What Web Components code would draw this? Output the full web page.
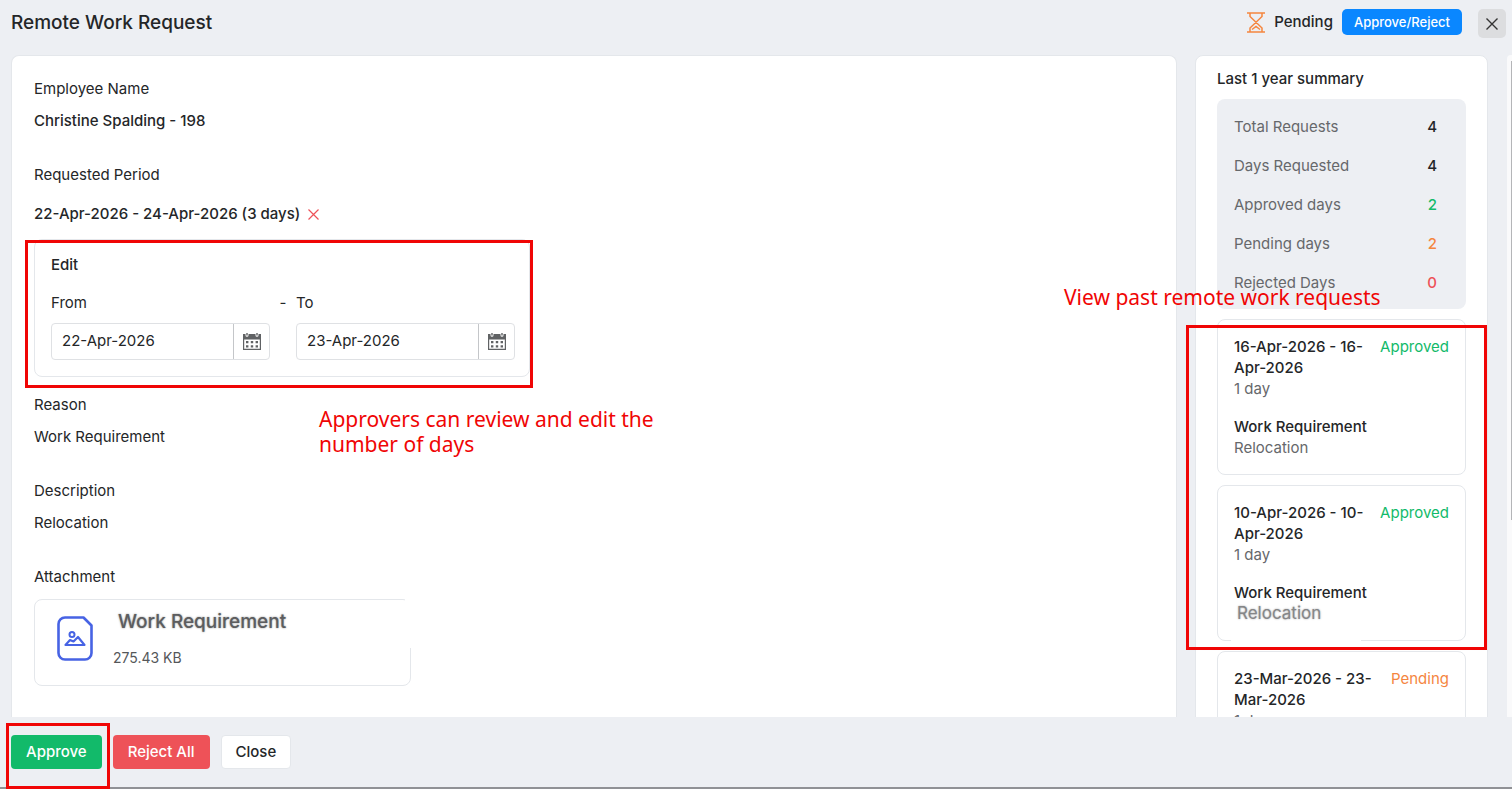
<!DOCTYPE html>
<html lang="en">
<head>
<meta charset="utf-8">
<meta name="viewport" content="width=device-width, initial-scale=1">
<title>Remote Work Request</title>
<style>
  html, body {
    margin: 0;
    height: 100%;
  }

  body {
    --text: #242628;
    --muted: #66686b;
    --line: #e4e7eb;
    --surface: #edeff3;
    --green: #12ba6a;
    --orange: #f5863f;
    --red: #ee5258;
    --mark: #f00505;
    font-family: Inter, "Liberation Sans", sans-serif;
    font-size: 15px;
    line-height: 24px;
    color: var(--text);
    background: var(--surface);
    overflow: hidden;
  }
</style>
</head>
<body>
<request-page>
  <request-header slot="header" heading="Remote Work Request" status="Pending"></request-header>

  <request-field label="Employee Name"><b>Christine Spalding - 198</b></request-field>
  <request-period label="Requested Period" value="22-Apr-2026 - 24-Apr-2026 (3 days)">
    <date-field name="from" label="From" value="22-Apr-2026"></date-field>
    <date-field name="to" label="To" value="23-Apr-2026"></date-field>
  </request-period>
  <request-field label="Reason">Work Requirement</request-field>
  <request-field label="Description">Relocation</request-field>
  <request-field label="Attachment">
    <attachment-card name="Work Requirement" size="275.43 KB"></attachment-card>
  </request-field>

  <year-summary slot="aside" heading="Last 1 year summary">
    <stat-row slot="stats" label="Total Requests" value="4"></stat-row>
    <stat-row slot="stats" label="Days Requested" value="4"></stat-row>
    <stat-row slot="stats" label="Approved days" value="2" tone="green"></stat-row>
    <stat-row slot="stats" label="Pending days" value="2" tone="orange"></stat-row>
    <stat-row slot="stats" label="Rejected Days" value="0" tone="red"></stat-row>
    <history-card period="16-Apr-2026 - 16-Apr-2026" days="1 day" status="Approved" reason="Work Requirement" note="Relocation"></history-card>
    <history-card period="10-Apr-2026 - 10-Apr-2026" days="1 day" status="Approved" reason="Work Requirement" note="Relocation" retouched></history-card>
    <history-card period="23-Mar-2026 - 23-Mar-2026" days="1 day" status="Pending" reason="Work Requirement" note="Relocation"></history-card>
  </year-summary>

  <action-bar slot="footer"></action-bar>
</request-page>

<script>
  class BaseElement extends HTMLElement {
    constructor() {
      super();
      this.attachShadow({ mode: 'open' });
    }

    connectedCallback() {
      this.shadowRoot.innerHTML = this.render();
    }

    attr(name) {
      return this.escapeHtml(this.getAttribute(name) || '');
    }

    escapeHtml(text) {
      const div = document.createElement('div');
      div.textContent = text;
      return div.innerHTML;
    }
  }

  class RequestPage extends BaseElement {
    render() {
      return `
        <style>
          :host {
            display: flex;
            flex-direction: column;
            height: 100vh;
          }

          .body {
            flex: 1;
            min-height: 0;
            display: flex;
            padding-left: 11px;
            overflow: hidden;
          }

          main {
            flex: 1;
            min-width: 0;
            box-sizing: border-box;
            padding: 21px 22px;
            border: 1px solid var(--line);
            border-bottom: 0;
            border-radius: 8px 8px 0 0;
            background: white;
            display: flex;
            flex-direction: column;
            gap: 30px;
            height: max-content;
            min-height: 100%;
          }

          aside {
            width: 293px;
            margin: 0 19px 0 18px;
          }

          .scroll {
            width: 5px;
            box-sizing: border-box;
            padding: 6px 0 0 4px;
            border-radius: 4px 0 0 0;
            background: #fafafb;
          }

          .thumb {
            height: 70%;
            background: #b4b5b8;
          }
        </style>
        <slot name="header"></slot>
        <div class="body">
          <main><slot></slot></main>
          <aside><slot name="aside"></slot></aside>
          <div class="scroll"><div class="thumb"></div></div>
        </div>
        <slot name="footer"></slot>
      `;
    }
  }

  class RequestHeader extends BaseElement {
    render() {
      return `
        <style>
          :host {
            display: block;
          }

          header {
            display: flex;
            align-items: flex-start;
            padding: 9px 6px 17px 11px;
          }

          h1 {
            flex: 1;
            margin: 0;
            font-size: 19px;
            line-height: 28px;
            font-weight: 500;
          }

          .status {
            display: flex;
            align-items: center;
            gap: 9px;
            line-height: 26px;
            font-weight: 500;
          }

          svg {
            display: block;
          }

          button {
            font: inherit;
            border: 0;
            border-radius: 5px;
            cursor: pointer;
          }

          .review {
            margin: 0 16px 0 9px;
            padding: 0 12px;
            font-size: 13px;
            line-height: 26px;
            font-weight: 500;
            color: white;
            background: #0a87ff;
          }

          .close {
            display: grid;
            place-items: center;
            width: 28px;
            height: 29px;
            padding: 0;
            color: #333;
            background: #dcdddf;
          }
        </style>
        <header>
          <h1>${this.attr('heading')}</h1>
          <span class="status">
            <svg width="18" height="21" viewBox="0 0 18 21" fill="none" stroke="#f5863f" stroke-width="1.500" aria-hidden="true">
              <path d="M0 1h18M0 20h18M3 1v3.500L15 16v4M15 1v3.500L3 16v4M5 17.500l4-3 4 3"/>
            </svg>
            ${this.attr('status')}
          </span>
          <button class="review" type="button">Approve/Reject</button>
          <button class="close" type="button" aria-label="Close">
            <svg width="12" height="12" viewBox="0 0 12 12" stroke="currentColor" stroke-width="1.400"><path d="M0.500 0.500l11 11M11.500 0.500l-11 11"/></svg>
          </button>
        </header>
      `;
    }
  }

  class RequestField extends BaseElement {
    render() {
      return `
        <style>
          :host {
            display: flex;
            flex-direction: column;
            gap: 8px;
          }

          ::slotted(b) {
            font-weight: 500;
          }
        </style>
        <div>${this.attr('label')}</div>
        <div><slot></slot></div>
      `;
    }
  }

  // Red rectangle laid over its positioned parent
  class MarkFrame extends BaseElement {
    render() {
      return `
        <style>
          :host {
            position: absolute;
            z-index: 1;
            box-sizing: border-box;
            border: 3px solid var(--mark);
            pointer-events: none;
          }
        </style>
      `;
    }
  }

  class MarkNote extends BaseElement {
    render() {
      return `
        <style>
          :host {
            position: absolute;
            z-index: 1;
            font: 21px/25px "Noto Sans", sans-serif;
            color: var(--mark);
            pointer-events: none;
          }
        </style>
        <slot></slot>
      `;
    }
  }

  class RequestPeriod extends BaseElement {
    render() {
      return `
        <style>
          :host {
            display: block;
            margin-bottom: -14px;
          }

          .value {
            display: flex;
            align-items: center;
            gap: 8px;
            height: 38px;
            margin: 8px 0 6px;
            font-weight: 500;
          }

          button {
            display: grid;
            padding: 0;
            border: 0;
            background: none;
            color: var(--red);
            cursor: pointer;
          }

          fieldset {
            position: relative;
            width: max-content;
            margin: 0;
            padding: 13px 14px 16px 16px;
            border: 1px solid var(--line);
            border-radius: 8px;
          }

          h2 {
            margin: 0 0 14px;
            font-size: 15px;
            font-weight: 500;
          }

          .range {
            display: flex;
          }

          .dash {
            width: 26px;
            text-align: center;
          }

          mark-frame {
            inset: 0 -4px -12px -10px;
          }

          mark-note {
            left: 284px;
            top: 167px;
            width: 360px;
          }
        </style>
        <div>${this.attr('label')}</div>
        <div class="value">
          ${this.attr('value')}
          <button type="button" aria-label="Remove period">
            <svg width="11" height="11" viewBox="0 0 11 11" stroke="#ee5258" stroke-width="1.200"><path d="M0.500 0.500l10 10M10.500 0.500l-10 10"/></svg>
          </button>
        </div>
        <fieldset aria-label="Edit period">
          <h2>Edit</h2>
          <div class="range">
            <slot name="from"></slot>
            <span class="dash">-</span>
            <slot name="to"></slot>
          </div>
          <mark-frame></mark-frame>
          <mark-note>Approvers can review and edit the number of days</mark-note>
        </fieldset>
      `;
    }

    connectedCallback() {
      super.connectedCallback();
      this.querySelectorAll('date-field').forEach(field => {
        field.slot = field.getAttribute('name');
      });
    }
  }

  class DateField extends BaseElement {
    render() {
      return `
        <style>
          :host {
            display: block;
            width: 219px;
          }

          label {
            display: block;
            margin-bottom: 8px;
          }

          .box {
            display: flex;
            box-sizing: border-box;
            height: 37px;
            border: 1px solid #dfe1e4;
            border-radius: 4px;
          }

          input {
            flex: 1;
            min-width: 0;
            padding: 0 10px 2px;
            border: 0;
            border-right: 1px solid #c4c6c9;
            outline: 0;
            background: none;
            font: inherit;
            color: inherit;
          }

          button {
            display: grid;
            place-items: center;
            width: 35px;
            padding: 0;
            border: 0;
            background: none;
            color: #606264;
            cursor: pointer;
          }
        </style>
        <label for="date">${this.attr('label')}</label>
        <div class="box">
          <input id="date" type="text" value="${this.attr('value')}">
          <button type="button" aria-label="Open calendar">
            <svg width="18" height="17" viewBox="0 0 18 17" fill="currentColor">
              <path fill-rule="evenodd" d="M0 1h2.500v1.200a1.500 1.500 0 0 0 3 0V1h7v1.200a1.500 1.500 0 0 0 3 0V1H18v16H0zM1.200 6.500v9.300h15.600V6.500z"/>
              <path d="M3.300 0h1.400v2.500H3.300zM13.300 0h1.400v2.500h-1.400zM3 8h2.400v2.300H3zM7.800 8h2.400v2.300H7.800zM12.600 8H15v2.300h-2.400zM3 12.200h2.400v2.300H3zM7.800 12.200h2.400v2.300H7.800zM12.600 12.200H15v2.300h-2.400z"/>
            </svg>
          </button>
        </div>
      `;
    }
  }

  class AttachmentCard extends BaseElement {
    render() {
      return `
        <style>
          :host {
            position: relative;
            display: flex;
            gap: 20px;
            box-sizing: border-box;
            width: 377px;
            height: 87px;
            margin-top: 2px;
            padding: 16px 22px;
            border: 1px solid var(--line);
            border-radius: 8px;
          }

          /* the outline stays open at the top right */
          :host::after {
            content: "";
            position: absolute;
            top: -1px;
            right: -1px;
            width: 6px;
            height: 49px;
            background: white;
          }

          .text {
            display: flex;
            flex-direction: column;
            gap: 12px;
            margin-top: -6px;
          }

          .name {
            padding-left: 5px;
            font-size: 19px;
            font-weight: 500;
            color: #5c5d5f;
            text-shadow: 0 0 2px #8c8d8f;
          }

          .size {
            font-size: 14px;
            color: #55575a;
          }
        </style>
        <svg width="36" height="45" viewBox="0 0 36 45" fill="none" stroke="#4763e4" stroke-width="2.600" stroke-linejoin="round" aria-hidden="true">
          <path d="M8 1.500h18.500l8 8V37a6.500 6.500 0 0 1-6.500 6.500H8A6.500 6.500 0 0 1 1.500 37V8A6.500 6.500 0 0 1 8 1.500z"/>
          <circle cx="15" cy="18.500" r="2.500" stroke-width="2"/>
          <path d="M8.500 29l4.500-5 3.500 1.500 4.500-4.500 6.500 8z" stroke-width="2.200"/>
        </svg>
        <div class="text">
          <div class="name">${this.attr('name')}</div>
          <div class="size">${this.attr('size')}</div>
        </div>
      `;
    }
  }

  class YearSummary extends BaseElement {
    render() {
      return `
        <style>
          :host {
            display: block;
            padding: 11px 21px 20px;
            border: 1px solid var(--line);
            border-radius: 8px;
            background: white;
          }

          h2 {
            margin: 0 0 8px;
            font-size: 15px;
            font-weight: 500;
          }

          .stats {
            margin-bottom: 10px;
            padding: 8px 29px 7px 17px;
            border-radius: 8px;
            background: var(--surface);
          }

          .history {
            position: relative;
            display: flex;
            flex-direction: column;
            gap: 10px;
          }

          mark-frame {
            top: 6px;
            left: -31px;
            right: -21px;
            height: 325px;
          }

          mark-note {
            top: -34px;
            left: -153px;
            white-space: nowrap;
          }
        </style>
        <h2>${this.attr('heading')}</h2>
        <div class="stats"><slot name="stats"></slot></div>
        <div class="history">
          <slot></slot>
          <mark-frame></mark-frame>
          <mark-note>View past remote work requests</mark-note>
        </div>
      `;
    }
  }

  class StatRow extends BaseElement {
    render() {
      return `
        <style>
          :host {
            display: flex;
            justify-content: space-between;
            line-height: 39px;
            color: var(--muted);
          }

          b {
            font-weight: 500;
            color: var(--text);
          }

          :host([tone="green"]) b {
            color: var(--green);
          }

          :host([tone="orange"]) b {
            color: var(--orange);
          }

          :host([tone="red"]) b {
            color: var(--red);
          }
        </style>
        <span>${this.attr('label')}</span>
        <b>${this.attr('value')}</b>
      `;
    }
  }

  class HistoryCard extends BaseElement {
    render() {
      return `
        <style>
          :host {
            position: relative;
            display: block;
            padding: 16px;
            border: 1px solid var(--line);
            border-radius: 8px;
            line-height: 21px;
          }

          .top {
            display: flex;
            justify-content: space-between;
            gap: 12px;
          }

          .period, .reason {
            font-weight: 500;
          }

          .status {
            color: var(--green);
          }

          :host([status="Pending"]) .status {
            color: var(--orange);
          }

          .days {
            margin-bottom: 17px;
          }

          .days, .note {
            color: var(--muted);
          }

          :host([retouched]) .note {
            padding-left: 3px;
            font-size: 17px;
            color: #858688;
            text-shadow: 0 0 2px #a0a1a3;
          }

          /* the outline is open under the note */
          :host([retouched])::after {
            content: "";
            position: absolute;
            left: 13px;
            right: 104px;
            bottom: -1px;
            height: 1px;
            background: white;
          }
        </style>
        <div class="top">
          <span class="period">${this.attr('period')}</span>
          <span class="status">${this.attr('status')}</span>
        </div>
        <div class="days">${this.attr('days')}</div>
        <div class="reason">${this.attr('reason')}</div>
        <div class="note">${this.attr('note')}</div>
      `;
    }
  }

  class ActionBar extends BaseElement {
    render() {
      return `
        <style>
          :host {
            display: block;
          }

          footer {
            display: flex;
            gap: 11px;
            padding: 18px 11px;
            border-bottom: 2px solid #909195;
          }

          .marked {
            position: relative;
          }

          button {
            height: 34px;
            padding: 0 14px;
            border: 1px solid transparent;
            border-radius: 4px;
            font: inherit;
            font-weight: 500;
            color: white;
            cursor: pointer;
          }

          .approve {
            background: var(--green);
          }

          .reject {
            background: var(--red);
          }

          .close {
            border-color: var(--line);
            color: var(--text);
            background: white;
          }

          mark-frame {
            inset: -12px -8px -20px -5px;
          }
        </style>
        <footer>
          <div class="marked">
            <button class="approve" type="button">Approve</button>
            <mark-frame></mark-frame>
          </div>
          <button class="reject" type="button">Reject All</button>
          <button class="close" type="button">Close</button>
        </footer>
      `;
    }
  }

  customElements.define('mark-frame', MarkFrame);
  customElements.define('mark-note', MarkNote);
  customElements.define('request-page', RequestPage);
  customElements.define('request-header', RequestHeader);
  customElements.define('request-field', RequestField);
  customElements.define('request-period', RequestPeriod);
  customElements.define('date-field', DateField);
  customElements.define('attachment-card', AttachmentCard);
  customElements.define('year-summary', YearSummary);
  customElements.define('stat-row', StatRow);
  customElements.define('history-card', HistoryCard);
  customElements.define('action-bar', ActionBar);
</script>
</body>
</html>
